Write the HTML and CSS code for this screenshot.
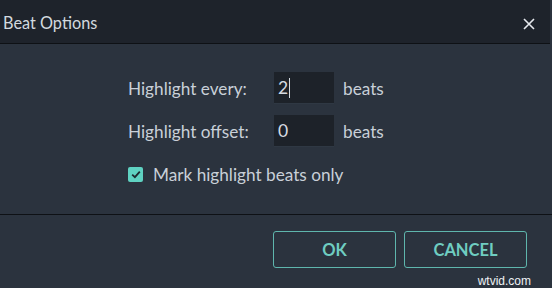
FILE: index.html
```html
<!DOCTYPE html>
<html lang="en">
<head>
    <meta charset="UTF-8">
    <title>Beat Options</title>
    <link rel="stylesheet" href="styles.css">
</head>
<body>

    <div class="dialog">
        <div class="titlebar">
            <span class="title">Beat Options</span>
            <button class="close" aria-label="Close">
                <svg width="12" height="12" viewBox="0 0 12 12">
                    <path d="M1 1 L11 11 M11 1 L1 11" stroke="#e6e9ee" stroke-width="1.6" fill="none"/>
                </svg>
            </button>
        </div>

        <div class="content">
            <div class="form">
                <label class="label">Highlight every:</label>
                <div class="field">2<span class="caret"></span></div>
                <span class="unit">beats</span>

                <label class="label">Highlight offset:</label>
                <div class="field">0</div>
                <span class="unit">beats</span>
            </div>

            <div class="check-row">
                <span class="checkbox">
                    <svg width="10" height="9" viewBox="0 0 10 9">
                        <path d="M1.2 4.6 L3.9 7.2 L8.8 1.6" stroke="#1e2a30" stroke-width="1.8" fill="none"/>
                    </svg>
                </span>
                <span class="check-label">Mark highlight beats only</span>
            </div>
        </div>

        <div class="footer">
            <button class="btn">OK</button>
            <button class="btn">CANCEL</button>
        </div>

        <span class="watermark">wtvid.com</span>
    </div>

</body>
</html>
```

FILE: styles.css
```css
body {
    margin: 0;
    font-family: Lato, "Open Sans", sans-serif;
    background-color: #2b333e;
    color: #c9d0d8;
}

.dialog {
    width: 552px;
    height: 288px;
    position: relative;
    overflow: hidden;
}

.titlebar {
    height: 43px;
    margin-right: 2px;
    background-color: #1e232b;
    border-bottom: 1px solid #0e1115;
    display: flex;
    align-items: center;
    justify-content: space-between;
    padding-left: 3px;
}

.title {
    font-size: 16.3px;
    color: #d3d9df;
    padding-top: 2px;
}

.close {
    background: none;
    border: none;
    padding: 0;
    width: 12px;
    height: 12px;
    margin-right: 15px;
    margin-top: 5px;
    display: flex;
}

.content {
    height: 142px;
    padding-top: 28px;
    padding-left: 128px;
    border-bottom: 1px solid #0e1115;
}

.form {
    display: grid;
    grid-template-columns: 137px 60px auto;
    grid-auto-rows: 32px;
    row-gap: 11px;
    column-gap: 9px;
    align-items: center;
}

.label,
.unit,
.check-label {
    font-size: 17.2px;
    color: #c9d0d8;
}

.field {
    height: 32px;
    background-color: #1d2229;
    border-bottom: 1px solid #2f3843;
    box-sizing: border-box;
    display: flex;
    align-items: center;
    padding-left: 4px;
    font-size: 17.5px;
    color: #d6dce2;
}

.caret {
    width: 1px;
    height: 20px;
    margin-left: 1px;
    background-color: #d6dce2;
}

.check-row {
    display: flex;
    align-items: center;
    gap: 10px;
    margin-top: 19px;
    height: 16px;
}

.checkbox {
    width: 15px;
    height: 15px;
    border-radius: 2px;
    background-color: #5fd2c2;
    display: flex;
    align-items: center;
    justify-content: center;
}

.footer {
    display: flex;
    justify-content: flex-end;
    gap: 8px;
    padding-top: 16px;
    padding-right: 25px;
}

.btn {
    width: 123px;
    height: 37px;
    background-color: #2b333e;
    border: 1.5px solid #5fb6ad;
    border-radius: 3px;
    color: #6fcdc1;
    font-family: Lato, "Open Sans", sans-serif;
    font-weight: bold;
    font-size: 16.5px;
}

.watermark {
    position: absolute;
    right: 21px;
    bottom: 0;
    font-family: "Liberation Sans", Arial, sans-serif;
    font-size: 12px;
    color: #eef1f4;
}
```
